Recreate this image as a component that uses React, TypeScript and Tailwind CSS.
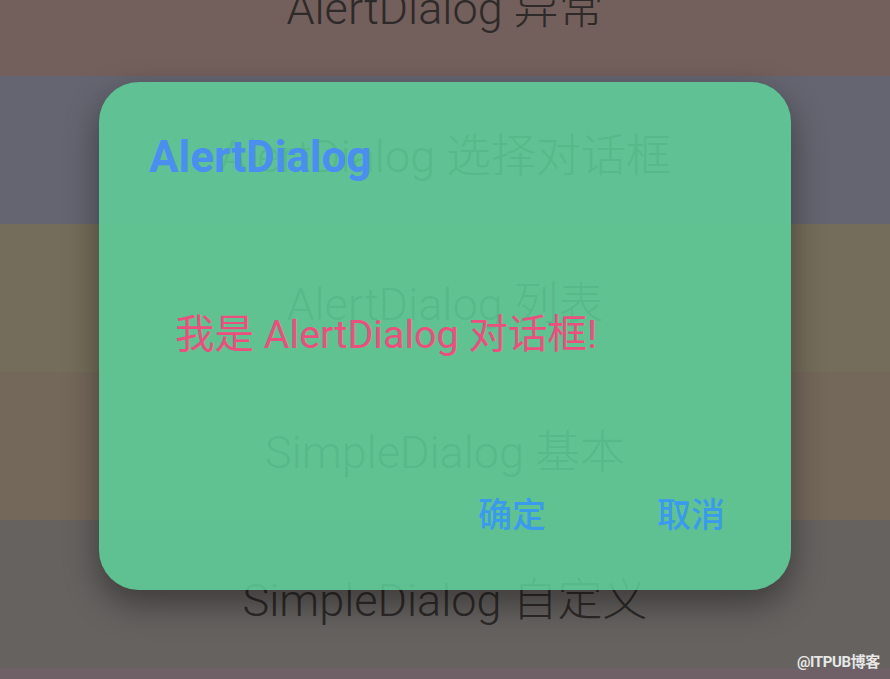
const bands = [
  { label: "AlertDialog 异常", bg: "bg-[#735f5c]" },
  { label: "AlertDialog 选择对话框", bg: "bg-[#646570]" },
  { label: "AlertDialog 列表", bg: "bg-[#746d5b]" },
  { label: "SimpleDialog 基本", bg: "bg-[#74685a]" },
  { label: "SimpleDialog 自定义", bg: "bg-[#656260]" },
  { label: "SimpleDialog 列表", bg: "bg-[#6f5f66]" },
];

export default function App() {
  return (
    <div
      className="relative w-[890px] h-[679px] overflow-hidden bg-[#656260]"
      style={{ fontFamily: 'Roboto, "Noto Sans CJK SC", sans-serif' }}
    >
      {/* list behind the scrim */}
      <div className="flex flex-col mt-[-72px]">
        {bands.map((b) => (
          <div
            key={b.label}
            className={`h-[148px] flex items-center justify-center pt-[14px] ${b.bg}`}
          >
            <span className="text-[45px] font-light text-[#2e2a29]">{b.label}</span>
          </div>
        ))}
      </div>

      {/* dialog */}
      <div className="absolute left-[99px] top-[82px] w-[692px] h-[508px] rounded-[40px] bg-[#5ed09a]/[0.86] shadow-[0_14px_34px_rgba(0,0,0,0.4)] flex flex-col">
        <div className="pt-[49px] pl-[50px] text-[44px] leading-[52px] font-bold text-[#4a8ff0]">
          AlertDialog
        </div>
        <div className="mt-[128px] pl-[76px] text-[39.5px] leading-[48px] text-[#ea4f7e]">
          我是 AlertDialog 对话框!
        </div>
        <div className="mt-[136px] pr-[66px] flex justify-end gap-[111px] text-[34px] leading-[40px] font-medium text-[#3a9aec]">
          <button>确定</button>
          <button>取消</button>
        </div>
      </div>

      {/* watermark */}
      <div className="absolute right-[10px] bottom-[6px] text-[15px] font-bold text-white/85 tracking-tight">
        @ITPUB博客
      </div>
    </div>
  );
}
